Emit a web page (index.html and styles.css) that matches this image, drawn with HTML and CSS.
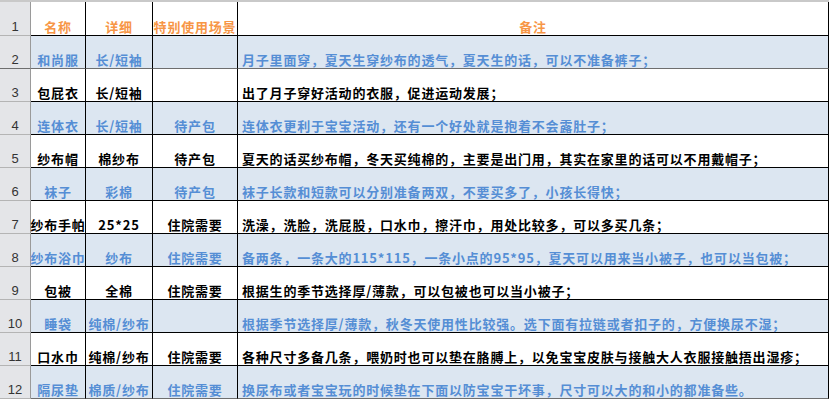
FILE: index.html
```html
<!DOCTYPE html>
<html lang="zh-CN">
<head>
<meta charset="utf-8">
<title>宝宝用品清单</title>
<link rel="stylesheet" href="styles.css">
</head>
<body>
<div class="topstrip"></div>
<div class="sheet">
  <div class="rh">1</div>
  <div class="c ctr hd">名称</div>
  <div class="c ctr hd">详细</div>
  <div class="c ctr hd">特别使用场景</div>
  <div class="c ctr hd">备注</div>

  <div class="rh">2</div>
  <div class="c ctr band">和尚服</div>
  <div class="c ctr band">长/短袖</div>
  <div class="c ctr band"></div>
  <div class="c note band">月子里面穿，夏天生穿纱布的透气，夏天生的话，可以不准备裤子；</div>

  <div class="rh">3</div>
  <div class="c ctr">包屁衣</div>
  <div class="c ctr">长/短袖</div>
  <div class="c ctr"></div>
  <div class="c note">出了月子穿好活动的衣服，促进运动发展；</div>

  <div class="rh">4</div>
  <div class="c ctr band">连体衣</div>
  <div class="c ctr band">长/短袖</div>
  <div class="c ctr band">待产包</div>
  <div class="c note band">连体衣更利于宝宝活动，还有一个好处就是抱着不会露肚子；</div>

  <div class="rh">5</div>
  <div class="c ctr">纱布帽</div>
  <div class="c ctr">棉纱布</div>
  <div class="c ctr">待产包</div>
  <div class="c note">夏天的话买纱布帽，冬天买纯棉的，主要是出门用，其实在家里的话可以不用戴帽子；</div>

  <div class="rh">6</div>
  <div class="c ctr band">袜子</div>
  <div class="c ctr band">彩棉</div>
  <div class="c ctr band">待产包</div>
  <div class="c note band">袜子长款和短款可以分别准备两双，不要买多了，小孩长得快；</div>

  <div class="rh">7</div>
  <div class="c ctr">纱布手帕</div>
  <div class="c ctr">25*25</div>
  <div class="c ctr">住院需要</div>
  <div class="c note">洗澡，洗脸，洗屁股，口水巾，擦汗巾，用处比较多，可以多买几条；</div>

  <div class="rh">8</div>
  <div class="c ctr band">纱布浴巾</div>
  <div class="c ctr band">纱布</div>
  <div class="c ctr band">住院需要</div>
  <div class="c note band">备两条，一条大的115*115，一条小点的95*95，夏天可以用来当小被子，也可以当包被；</div>

  <div class="rh">9</div>
  <div class="c ctr">包被</div>
  <div class="c ctr">全棉</div>
  <div class="c ctr">住院需要</div>
  <div class="c note">根据生的季节选择厚/薄款，可以包被也可以当小被子；</div>

  <div class="rh">10</div>
  <div class="c ctr band">睡袋</div>
  <div class="c ctr band">纯棉/纱布</div>
  <div class="c ctr band"></div>
  <div class="c note band">根据季节选择厚/薄款，秋冬天使用性比较强。选下面有拉链或者扣子的，方便换尿不湿；</div>

  <div class="rh">11</div>
  <div class="c ctr">口水巾</div>
  <div class="c ctr">纯棉/纱布</div>
  <div class="c ctr">住院需要</div>
  <div class="c note">各种尺寸多备几条，喂奶时也可以垫在胳膊上，以免宝宝皮肤与接触大人衣服接触捂出湿疹；</div>

  <div class="rh last">12</div>
  <div class="c ctr band last">隔尿垫</div>
  <div class="c ctr band last">棉质/纱布</div>
  <div class="c ctr band last">住院需要</div>
  <div class="c note band last">换尿布或者宝宝玩的时候垫在下面以防宝宝干坏事，尺寸可以大的和小的都准备些。</div>
</div>
</body>
</html>
```

FILE: styles.css
```css
html, body {
  margin: 0;
  padding: 0;
  background: #ffffff;
}

.topstrip {
  width: 829px;
  height: 2px;
  background: #c9c9c9;
}

.sheet {
  display: grid;
  grid-template-columns: 31px 55px 67px 85px 591px;
  grid-template-rows: 34px repeat(11, 33px);
  width: 829px;
}

.rh {
  background: #e4e5e8;
  border-right: 1px solid #9a9a9a;
  border-bottom: 1px solid #b4b4b4;
  font-family: "Liberation Sans", Arial, sans-serif;
  font-size: 13px;
  color: #333333;
  display: flex;
  align-items: flex-end;
  justify-content: center;
  padding-bottom: 1px;
  line-height: 14px;
}

.c {
  border-right: 1px solid #000000;
  border-bottom: 1px solid #000000;
  font-family: "Noto Sans CJK SC", "Noto Sans", sans-serif;
  font-size: 13px;
  font-weight: 700;
  letter-spacing: 0.8px;
  line-height: 15px;
  color: #000000;
  display: flex;
  align-items: flex-end;
  white-space: nowrap;
  padding-bottom: 1px;
  overflow: visible;
}

.ctr {
  justify-content: center;
}

.note {
  padding-left: 4px;
}

.hd {
  color: #f79646;
}

.band {
  background: #dce6f1;
  color: #558ed5;
}

.sheet > :nth-child(-n+10):nth-child(n+6) {
  border-bottom-color: #6e6e6e;
}

.last {
  border-bottom-color: #6e6e6e;
}

.rh.last {
  border-bottom-color: #b4b4b4;
}
```
